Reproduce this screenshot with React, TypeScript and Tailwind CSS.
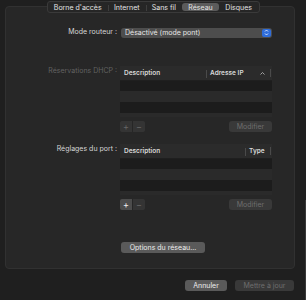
import React from "react";

const font = { fontFamily: "Inter, 'Liberation Sans', sans-serif" };

function Tabs() {
  const tabs = [
    { label: "Borne d'accès", w: "w-[61px]" },
    { label: "Internet", w: "w-[38px]" },
    { label: "Sans fil", w: "w-[37px]" },
    { label: "Réseau", w: "w-[37px]", active: true },
    { label: "Disques", w: "w-[40px]" },
  ];
  return (
    <div className="relative z-10 mx-auto flex h-[12px] w-[213px] items-center rounded-[3px] border border-[#3a3a3a] bg-[#262626]">
      {tabs.map((t, i) => (
        <div key={t.label} className={`relative flex h-full items-center justify-center ${t.w}`}>
          {t.active && <div className="absolute inset-y-[1px] inset-x-0 rounded-[3px] bg-[#5b5b5b]" />}
          {i > 0 && !t.active && !tabs[i - 1].active && (
            <div className="absolute left-0 top-[3px] h-[6px] w-px bg-[#3e3e3e]" />
          )}
          <span className="relative text-[7px] leading-none text-[#e4e4e4]">{t.label}</span>
        </div>
      ))}
    </div>
  );
}

function Table({ cols }: { cols: { label: string; w: string; chevron?: boolean }[] }) {
  return (
    <div className="w-[152px] bg-[#2a2a2a]">
      <div className="flex h-[15px] items-center border-b border-[#1f1f1f] bg-[#2b2b2b]">
        {cols.map((c, i) => (
          <div key={c.label} className={`relative flex h-full items-center ${c.w}`}>
            {i > 0 && <div className="absolute left-0 top-[4px] h-[8px] w-px bg-[#4a4a4a]" />}
            <span className="pl-[4px] text-[6.5px] font-semibold leading-none text-[#d8d8d8]">{c.label}</span>
            {c.chevron && (
              <svg className="absolute right-[5px] top-[6px]" width="5" height="3" viewBox="0 0 5 3">
                <path d="M0.5 2.5 L2.5 0.5 L4.5 2.5" stroke="#bdbdbd" strokeWidth="0.8" fill="none" />
              </svg>
            )}
          </div>
        ))}
        <div className="ml-auto mr-[1px] h-[8px] w-px bg-[#4a4a4a]" />
      </div>
      <div className="h-[10px] bg-[#1c1c1c]" />
      <div className="h-[11px] bg-[#2a2a2a]" />
      <div className="h-[11px] bg-[#1c1c1c]" />
      <div className="h-[4px] bg-[#2a2a2a]" />
    </div>
  );
}

function PlusMinus({ plusOn }: { plusOn?: boolean }) {
  return (
    <div className="flex h-[11px] w-[25px] overflow-hidden rounded-[2px]">
      <div className={`flex w-[12px] items-center justify-center ${plusOn ? "bg-[#4c4c4c] text-[#f0f0f0]" : "bg-[#343434] text-[#666]"}`}>
        <span className="text-[9px] leading-none">+</span>
      </div>
      <div className="w-px bg-[#262626]" />
      <div className="flex w-[12px] items-center justify-center bg-[#343434] text-[#666]">
        <span className="text-[9px] leading-none">−</span>
      </div>
    </div>
  );
}

function Btn({ children, disabled, className = "" }: { children: React.ReactNode; disabled?: boolean; className?: string }) {
  return (
    <div
      className={`flex h-[11px] items-center justify-center rounded-[3px] text-[7px] leading-none ${
        disabled ? "bg-[#393939] text-[#6e6e6e]" : "bg-[#5a5a5a] text-[#ececec]"
      } ${className}`}
    >
      {children}
    </div>
  );
}

export default function App() {
  return (
    <div className="relative h-[300px] w-[306px] overflow-hidden bg-[#1f1f1f] pt-[1px]" style={font}>
      <Tabs />
      <div className="-mt-[7px] ml-[5px] flex h-[263px] w-[290px] flex-col rounded-[4px] border border-[#313131] bg-[#272727]">
        {/* Mode routeur */}
        <div className="mt-[20px] flex h-[11px] items-center">
          <div className="w-[111px] text-right text-[7px] text-[#d6d6d6]">Mode routeur :</div>
          <div className="ml-[4px] flex h-[10px] w-[151px] items-center rounded-[3px] bg-[#4d4d4d] pl-[4px]">
            <span className="text-[7px] leading-none text-[#e6e6e6]">Désactivé (mode pont)</span>
            <div className="ml-auto mr-[1px] flex h-[8px] w-[9px] items-center justify-center rounded-[2px] bg-[#2e6ddc]">
              <svg width="5" height="7" viewBox="0 0 5 7">
                <path d="M1 2.5 L2.5 1 L4 2.5 M1 4.5 L2.5 6 L4 4.5" stroke="#fff" strokeWidth="0.8" fill="none" />
              </svg>
            </div>
          </div>
        </div>

        {/* Réservations DHCP */}
        <div className="mt-[28px] flex">
          <div className="w-[111px] text-right text-[7px] leading-[10px] text-[#626262]">Réservations DHCP :</div>
          <div className="ml-[3px] flex flex-col">
            <Table
              cols={[
                { label: "Description", w: "w-[86px]" },
                { label: "Adresse IP", w: "w-[64px]", chevron: true },
              ]}
            />
            <div className="mt-[4px] flex items-center justify-between">
              <PlusMinus />
              <Btn disabled className="w-[43px]">Modifier</Btn>
            </div>
          </div>
        </div>

        {/* Réglages du port */}
        <div className="mt-[12px] flex">
          <div className="w-[111px] text-right text-[7px] leading-[10px] text-[#d6d6d6]">Réglages du port :</div>
          <div className="ml-[3px] flex flex-col">
            <Table
              cols={[
                { label: "Description", w: "w-[125px]" },
                { label: "Type", w: "w-[25px]" },
              ]}
            />
            <div className="mt-[4px] flex items-center justify-between">
              <PlusMinus plusOn />
              <Btn disabled className="w-[43px]">Modifier</Btn>
            </div>
          </div>
        </div>

        <div className="mt-[32px] ml-[115px]">
          <Btn className="w-[84px]">Options du réseau...</Btn>
        </div>
      </div>

      <div className="mt-[11px] flex justify-end gap-[8px] pr-[12px]">
        <Btn className="w-[42px]">Annuler</Btn>
        <Btn disabled className="w-[59px]">Mettre à jour</Btn>
      </div>
      <div className="absolute right-0 top-[200px] h-[100px] w-px bg-[#3a3a3a]" />
    </div>
  );
}
